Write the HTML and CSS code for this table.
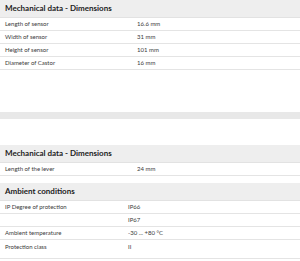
FILE: index.html
```html
<!DOCTYPE html>
<html>
<head>
<meta charset="utf-8">
<link rel="stylesheet" href="styles.css">
</head>
<body>
<div class="page">
  <section class="spec spec-first">
    <div class="spec-head">Mechanical data - Dimensions</div>
    <div class="row"><span class="label">Length of sensor</span><span class="value">16.6 mm</span></div>
    <div class="row"><span class="label">Width of sensor</span><span class="value">31 mm</span></div>
    <div class="row"><span class="label">Height of sensor</span><span class="value">101 mm</span></div>
    <div class="row"><span class="label">Diameter of Castor</span><span class="value">16 mm</span></div>
  </section>

  <div class="divider"></div>

  <section class="spec spec-second">
    <div class="spec-head">Mechanical data - Dimensions</div>
    <div class="row"><span class="label">Length of the lever</span><span class="value">24 mm</span></div>
  </section>

  <section class="spec spec-third">
    <div class="spec-head">Ambient conditions</div>
    <div class="row"><span class="label">IP Degree of protection</span><span class="value">IP66</span></div>
    <div class="row"><span class="label"></span><span class="value">IP67</span></div>
    <div class="row"><span class="label">Ambient temperature</span><span class="value">-30 ... +80 °C</span></div>
    <div class="row row-last"><span class="label">Protection class</span><span class="value">II</span></div>
  </section>
</div>
</body>
</html>
```

FILE: styles.css
```css
html, body {
  margin: 0;
  padding: 0;
  background: #fff;
}

body {
  font-family: Lato, "Open Sans", sans-serif;
  color: #3a3a3a;
  overflow: hidden;
}

.page {
  display: flex;
  flex-direction: column;
}

.spec-head {
  background: #eeeeee;
  height: 17px;
  line-height: 17px;
  padding-left: 5px;
  font-size: 8px;
  font-weight: 700;
  color: #222;
  border-bottom: 1px solid #e2e2e2;
}

.row {
  display: grid;
  grid-template-columns: 132px 1fr;
  height: 12px;
  line-height: 12px;
  padding-left: 5px;
  font-size: 6px;
  border-bottom: 1px solid #e4e4e4;
}

.spec-third .row {
  grid-template-columns: 123px 1fr;
}

.row-last {
  height: 18px;
  line-height: 13px;
}

.divider {
  margin-top: 42px;
  height: 7px;
  background: #e8e8e8;
}

.spec-second {
  margin-top: 26px;
}

.spec-third {
  margin-top: 7px;
}
```
